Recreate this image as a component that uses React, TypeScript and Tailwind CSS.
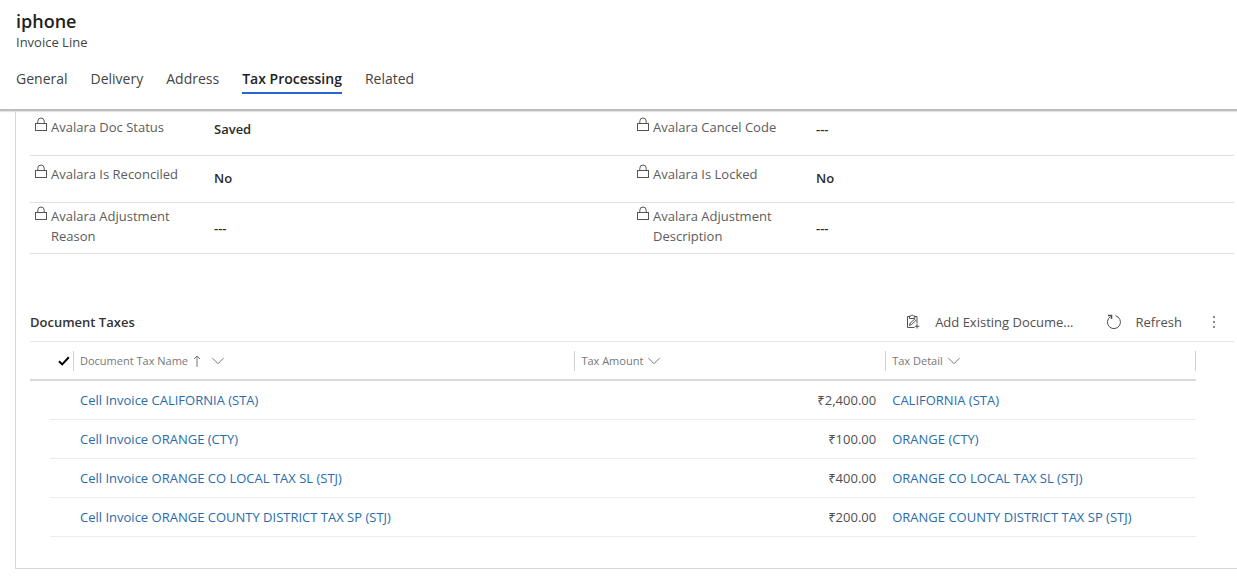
import type { ReactNode } from "react";

const tabs = ["General", "Delivery", "Address", "Tax Processing", "Related"];

const fields = [
  { label: "Avalara Doc Status", value: "Saved", row: "pt-[5px]", valuePad: "pt-[2px]" },
  { label: "Avalara Cancel Code", value: "---", row: "pt-[5px]", valuePad: "pt-[2px]" },
  { label: "Avalara Is Reconciled", value: "No", row: "pt-2", valuePad: "pt-1" },
  { label: "Avalara Is Locked", value: "No", row: "pt-2", valuePad: "pt-1" },
  { label: "Avalara Adjustment Reason", value: "---", row: "pt-[3px]", valuePad: "pt-3" },
  { label: "Avalara Adjustment Description", value: "---", row: "pt-[3px]", valuePad: "pt-3" },
];

const taxes = [
  { detail: "CALIFORNIA (STA)", amount: "₹2,400.00" },
  { detail: "ORANGE (CTY)", amount: "₹100.00" },
  { detail: "ORANGE CO LOCAL TAX SL (STJ)", amount: "₹400.00" },
  { detail: "ORANGE COUNTY DISTRICT TAX SP (STJ)", amount: "₹200.00" },
];

function LockIcon() {
  return (
    <svg className="h-4 w-3 shrink-0 text-[#555]" viewBox="0 0 12 16" fill="none" stroke="currentColor" strokeWidth="1" aria-hidden="true">
      <rect x="0.5" y="6.5" width="11" height="7" />
      <path d="M2.8 6.5V4.200a3.200 3.200 0 0 1 6.400 0v2.300" />
    </svg>
  );
}

function ChevronIcon() {
  return (
    <svg className="h-2 w-3" viewBox="0 0 12 8" fill="none" stroke="currentColor" aria-hidden="true">
      <path d="M0.5 1.2 6 6.7l5.500-5.500" />
    </svg>
  );
}

function SortUpIcon() {
  return (
    <svg className="h-3 w-2" viewBox="0 0 8 12" fill="none" stroke="currentColor" aria-hidden="true">
      <path d="M4 12V1M1 4l3-3 3 3" />
    </svg>
  );
}

function CheckIcon() {
  return (
    <svg className="h-[10px] w-3" viewBox="0 0 12 10" fill="none" stroke="currentColor" strokeWidth="2" aria-hidden="true">
      <path d="M1 5.2 4.2 8.4 10.800 1.200" />
    </svg>
  );
}

function ClipboardIcon() {
  return (
    <svg className="h-[15px] w-[14px]" viewBox="0 0 14 15" fill="none" stroke="currentColor" aria-hidden="true">
      <path d="M8.500 13.500H1.500v-11h2M8.500 2.500h2.500v7" />
      <path d="M3.500 4.500v-2.500h1.500a1.200 1.200 0 0 1 2.300 0h1.500v2.500z" />
      <path d="M3.500 11.500 4.200 9l4.300-3.700 1.300 1.300-4.300 4zM11 10v4.500M8.800 12.300h4.500" />
    </svg>
  );
}

function RefreshIcon() {
  return (
    <svg className="h-4 w-4" viewBox="0 0 16 16" fill="none" stroke="currentColor" aria-hidden="true">
      <path d="M9.500 1.800A6.500 6.500 0 1 1 4.500 2.600" />
      <path d="M2 1.500h3.500V5" strokeWidth="1.500" />
    </svg>
  );
}

function HeaderCell({ children, last = false }: { children: ReactNode; last?: boolean }) {
  return (
    <th scope="col" className="p-0 text-left font-normal">
      <button
        type="button"
        className={
          last
            ? "flex h-5 w-full items-center gap-[5px] border-x border-[#d0d0d0] pl-[6px] text-[11px] text-[#777]"
            : "flex h-5 w-full items-center gap-[5px] border-l border-[#d0d0d0] pl-[6px] text-[11px] text-[#777]"
        }
      >
        {children}
      </button>
    </th>
  );
}

export default function App() {
  return (
    <div className="bg-white pb-[11px] font-['Open_Sans','Noto_Sans',sans-serif] text-[13px] leading-5 text-[#505050]">
      <header className="border-b-2 border-[#bdbdbd] px-4 pt-[9px] shadow-[0_1px_1px_#e4e4e4]">
        <h1 className="text-[18px] leading-6 font-semibold text-[#222]">iphone</h1>
        <p className="h-[18px] text-[13px] leading-[18px] text-[#444]">Invoice Line</p>
        <nav className="mt-[15px] flex h-[43px] items-start gap-[23px] text-sm">
          {tabs.map((tab) => (
            <a
              key={tab}
              href="#"
              className={
                tab === "Tax Processing"
                  ? "border-b-2 border-[#2563d9] pt-[3px] pb-[3px] font-semibold text-[#222]"
                  : "pt-[3px] text-[#444]"
              }
            >
              {tab}
            </a>
          ))}
        </nav>
      </header>

      <main className="ml-[15px] border-b border-l border-[#d6d6d6] pt-px pl-[14px]">
        <dl className="mr-[3px] grid grid-cols-2 grid-rows-[44px_47px_51px]">
          {fields.map((field) => (
            <div key={field.label} className={`flex border-b border-[#e0e0e0] pl-[5px] ${field.row}`}>
              <dt className="flex w-[179px] gap-1 pr-8 text-[#5c5c5c]">
                <LockIcon />
                <span>{field.label}</span>
              </dt>
              <dd className={`font-semibold text-[#2b2b2b] ${field.valuePad}`}>{field.value}</dd>
            </div>
          ))}
        </dl>

        <section className="pt-[48px] pb-[31px]">
          <div className="mr-[3px] flex h-10 items-center border-b border-[#e6e6e6]">
            <h2 className="flex-1 font-semibold text-[#333]">Document Taxes</h2>
            <button type="button" className="flex items-center gap-[15px]">
              <ClipboardIcon />
              Add Existing Docume...
            </button>
            <button type="button" className="ml-8 flex items-center gap-[14px]">
              <RefreshIcon />
              Refresh
            </button>
            <button type="button" aria-label="More commands" className="mr-3 ml-6 flex w-4 justify-center">
              <svg className="h-3 w-1" viewBox="0 0 4 12" fill="currentColor" aria-hidden="true">
                <circle cx="2" cy="1" r="0.9" />
                <circle cx="2" cy="6" r="0.9" />
                <circle cx="2" cy="11" r="0.9" />
              </svg>
            </button>
          </div>

          <div className="mr-[41px]">
            <table className="w-full table-fixed border-collapse">
              <colgroup>
                <col className="w-[20px]" />
                <col className="w-[23px]" />
                <col className="w-[43%]" />
                <col />
                <col />
              </colgroup>
              <thead>
                <tr className="h-[38px] border-b-2 border-[#d9d9d9]">
                  <th className="p-0" />
                  <th scope="col" className="p-0">
                    <button type="button" aria-label="Select all" className="flex h-5 items-center pl-2 text-black">
                      <CheckIcon />
                    </button>
                  </th>
                  <HeaderCell>
                    Document Tax Name
                    <SortUpIcon />
                    <span className="pl-[6px]"><ChevronIcon /></span>
                  </HeaderCell>
                  <HeaderCell>
                    Tax Amount
                    <ChevronIcon />
                  </HeaderCell>
                  <HeaderCell last>
                    Tax Detail
                    <ChevronIcon />
                  </HeaderCell>
                </tr>
              </thead>
              <tbody>
                {taxes.map((tax) => (
                  <tr key={tax.detail} className="h-[39px]">
                    <td className="p-0" />
                    <td className="border-b border-[#ececec] p-0" />
                    <td className="border-b border-[#ececec] p-0 pl-[7px]">
                      <a href="#" className="text-[#2a6cab]">Cell Invoice {tax.detail}</a>
                    </td>
                    <td className="border-b border-[#ececec] p-0 pr-[9px] text-right">{tax.amount}</td>
                    <td className="border-b border-[#ececec] p-0 pl-[7px]">
                      <a href="#" className="text-[#2a6cab]">{tax.detail}</a>
                    </td>
                  </tr>
                ))}
              </tbody>
            </table>
          </div>
        </section>
      </main>
    </div>
  );
}
